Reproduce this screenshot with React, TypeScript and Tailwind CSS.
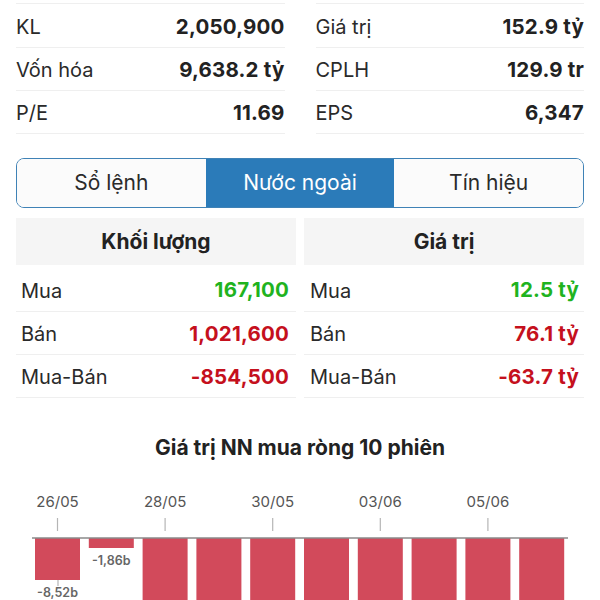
const stats = [
  [
    { label: 'KL', value: '2,050,900' },
    { label: 'Vốn hóa', value: '9,638.2 tỷ' },
    { label: 'P/E', value: '11.69' },
  ],
  [
    { label: 'Giá trị', value: '152.9 tỷ' },
    { label: 'CPLH', value: '129.9 tr' },
    { label: 'EPS', value: '6,347' },
  ],
]

const tabs = ['Sổ lệnh', 'Nước ngoài', 'Tín hiệu']

const tables = [
  {
    title: 'Khối lượng',
    rows: [
      { label: 'Mua', value: '167,100', up: true },
      { label: 'Bán', value: '1,021,600', up: false },
      { label: 'Mua-Bán', value: '-854,500', up: false },
    ],
  },
  {
    title: 'Giá trị',
    rows: [
      { label: 'Mua', value: '12.5 tỷ', up: true },
      { label: 'Bán', value: '76.1 tỷ', up: false },
      { label: 'Mua-Bán', value: '-63.7 tỷ', up: false },
    ],
  },
]

// bar bottoms in svg coords, axis sits at y=67
const bars = [
  { bottom: 109, label: '-8,52b', date: '26/05' },
  { bottom: 77, label: '-1,86b' },
  { bottom: 200, date: '28/05' },
  { bottom: 200 },
  { bottom: 200, date: '30/05' },
  { bottom: 200 },
  { bottom: 200, date: '03/06' },
  { bottom: 200 },
  { bottom: 200, date: '05/06' },
  { bottom: 200 },
]

export default function App() {
  return (
    <div className="h-[600px] w-[600px] overflow-hidden bg-white font-['Inter','Liberation_Sans',sans-serif] text-[#222]">
      <div className="grid grid-cols-2 gap-[31px] px-4 pt-[3px]">
        {stats.map((col, i) => (
          <div key={i} className="border-t border-[#efefef]">
            {col.map((s, si) => (
              <div
                key={s.label}
                className={
                  (si === 0 ? 'h-[44px] pt-[3px] ' : 'h-[43px] pt-[2px] ') +
                  'flex items-center justify-between border-b border-[#efefef] text-[20px]'
                }
              >
                <span className="text-[#2a2a2a]">{s.label}</span>
                <span className="text-[20.5px] font-bold tracking-[0.2px]">{s.value}</span>
              </div>
            ))}
          </div>
        ))}
      </div>

      <div className="mx-4 mt-6 flex h-[50px] overflow-hidden rounded-lg border border-[#3f82b6]">
        {tabs.map((t, i) => (
          <div
            key={t}
            className={
              i === 1
                ? 'flex flex-1 items-center justify-center bg-[#2b7bb9] text-[21px] text-white'
                : 'flex flex-1 items-center justify-center bg-[#fbfbfb] text-[21px] text-[#2a2a2a]'
            }
          >
            {t}
          </div>
        ))}
      </div>

      <div className="mx-4 mt-[10px] grid grid-cols-2 gap-2">
        {tables.map((tb, ti) => (
          <div key={tb.title}>
            <div className="flex h-[47px] items-center justify-center bg-[#f5f5f5] text-[21px] font-bold">
              {tb.title}
            </div>
            {tb.rows.map((r, ri) => (
              <div
                key={r.label}
                className={
                  (ri === 0 ? 'h-[47px] pt-[5px] ' : 'h-[43px] pt-[2px] ') +
                  (ti === 0 ? 'pl-[5px] pr-[7px] ' : 'pl-[6px] pr-[5px] ') +
                  'flex items-center justify-between border-b border-[#efefef] text-[20px]'
                }
              >
                <span className="text-[#2a2a2a]">{r.label}</span>
                <span
                  className={
                    r.up
                      ? 'text-[20.5px] font-bold tracking-[0.2px] text-[#1fb31f]'
                      : 'text-[20.5px] font-bold tracking-[0.2px] text-[#c5101d]'
                  }
                >
                  {r.value}
                </span>
              </div>
            ))}
          </div>
        ))}
      </div>

      <h2 className="mt-[38px] text-center text-[21px] leading-6 font-bold">Giá trị NN mua ròng 10 phiên</h2>

      <svg width="600" height="140" className="mt-[11px] block" viewBox="0 0 600 140">
        {bars.map((b, i) => {
          const x = 35 + i * 53.8
          const cx = x + 22.5
          return (
            <g key={i}>
              {b.date && (
                <>
                  <text
                    x={cx}
                    y={36}
                    textAnchor="middle"
                    fontSize="15"
                    fill="#555"
                    fontFamily="Inter, 'Liberation Sans', sans-serif"
                  >
                    {b.date}
                  </text>
                  <line x1={cx} x2={cx} y1={47} y2={60} stroke="#b5b5b5" strokeWidth="1.2" />
                </>
              )}
              <rect x={x} y={67} width={45} height={b.bottom - 67} fill="#d24a5b" />
              {b.label && (
                <text
                  x={cx}
                  y={b.bottom + 17}
                  textAnchor="middle"
                  fontSize="12.5"
                  fontWeight="600"
                  fill="#666"
                  fontFamily="Inter, 'Liberation Sans', sans-serif"
                >
                  {b.label}
                </text>
              )}
            </g>
          )
        })}
        <line x1={58} x2={58} y1={109} y2={115} stroke="#b5b5b5" strokeWidth="1.2" />
        <line x1={32} x2={568} y1={67} y2={67} stroke="#8a8a8a" strokeWidth="1.5" />
      </svg>
    </div>
  )
}
